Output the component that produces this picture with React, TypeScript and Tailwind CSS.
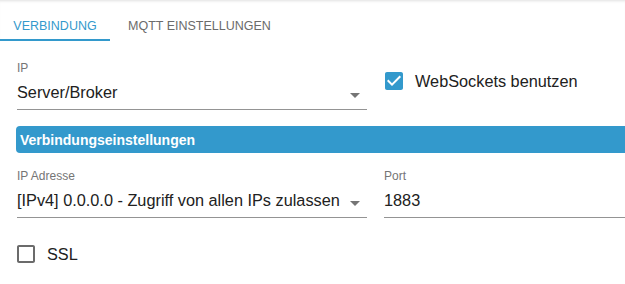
import React, { useState } from 'react';

const BLUE = '#3399cc';

const CheckIcon: React.FC<{ checked: boolean }> = ({ checked }) => (
    <svg width="24" height="24" viewBox="0 0 24 24" className="shrink-0">
        {checked ? (
            <path
                fill={BLUE}
                d="M19 3H5c-1.11 0-2 .9-2 2v14c0 1.1.89 2 2 2h14c1.11 0 2-.9 2-2V5c0-1.1-.89-2-2-2zm-9 14l-5-5 1.41-1.41L10 14.17l7.59-7.59L19 8l-9 9z"
            />
        ) : (
            <path
                fill="#6b6b6b"
                d="M19 5v14H5V5h14m0-2H5c-1.1 0-2 .9-2 2v14c0 1.1.9 2 2 2h14c1.1 0 2-.9 2-2V5c0-1.1-.9-2-2-2z"
            />
        )}
    </svg>
);

const ArrowDown = () => (
    <svg width="24" height="24" viewBox="0 0 24 24" className="absolute right-0 top-0 pointer-events-none">
        <path fill="#757575" d="M7 10l5 5 5-5z" />
    </svg>
);

interface FieldProps {
    label: string;
    value: string;
    select?: boolean;
}

const Field: React.FC<FieldProps> = ({ label, value, select }) => (
    <div className="flex flex-col">
        <span className="text-[12px] leading-[14px] text-[#757575]">{label}</span>
        <div className="relative mt-[8px] pb-[7px] border-b border-[#949494]">
            <span className="block text-[16.3px] leading-[19px] text-[#212121] whitespace-nowrap">{value}</span>
            {select && <ArrowDown />}
        </div>
    </div>
);

export default function App() {
    const [tab, setTab] = useState(0);
    const [ws, setWs] = useState(true);
    const [ssl, setSsl] = useState(false);

    return (
        <div className="w-[625px] h-[284px] overflow-hidden bg-white font-['Liberation_Sans',Arial,sans-serif]">
            {/* tabs */}
            <div className="flex h-[41px] shadow-[inset_0_3px_3px_-2px_rgba(0,0,0,0.12)]">
                <button
                    onClick={() => setTab(0)}
                    className="relative w-[110px] h-[41px] pt-[11px] text-center text-[12.5px] leading-[14px] uppercase"
                    style={{ color: tab === 0 ? BLUE : '#6b6b6b' }}
                >
                    Verbindung
                    {tab === 0 && <span className="absolute left-0 right-0 top-[39px] h-[2px] bg-[#3399cc]" />}
                </button>
                <button
                    onClick={() => setTab(1)}
                    className="relative h-[41px] pt-[11px] pl-[18px] pr-[16px] text-left text-[12.5px] leading-[14px] uppercase"
                    style={{ color: tab === 1 ? BLUE : '#6b6b6b' }}
                >
                    MQTT Einstellungen
                    {tab === 1 && <span className="absolute left-0 right-0 top-[39px] h-[2px] bg-[#3399cc]" />}
                </button>
            </div>

            {/* row 1 */}
            <div className="grid grid-cols-[350px_350px] gap-x-[17px] pl-[17px] mt-[20px]">
                <Field label="IP" value="Server/Broker" select />
                <label className="flex items-center gap-[9px] mt-[8px] -ml-[2px] h-[24px] cursor-pointer" onClick={() => setWs(!ws)}>
                    <CheckIcon checked={ws} />
                    <span className="text-[16.3px] leading-[19px] text-[#212121]">WebSockets benutzen</span>
                </label>
            </div>

            {/* section header */}
            <div className="ml-[16px] mt-[16px] w-[700px] h-[27px] flex items-center pl-[4px] rounded-l-[4px] bg-[#3399cc]">
                <span className="text-[14px] font-bold text-white leading-[16px]">Verbindungseinstellungen</span>
            </div>

            {/* row 2 */}
            <div className="grid grid-cols-[350px_350px] gap-x-[17px] pl-[17px] mt-[16px]">
                <Field label="IP Adresse" value="[IPv4] 0.0.0.0 - Zugriff von allen IPs zulassen" select />
                <Field label="Port" value="1883" />
            </div>

            <label className="flex items-center gap-[9px] ml-[14px] mt-[24px] h-[24px] cursor-pointer" onClick={() => setSsl(!ssl)}>
                <CheckIcon checked={ssl} />
                <span className="text-[16.3px] leading-[19px] text-[#212121]">SSL</span>
            </label>
        </div>
    );
}
